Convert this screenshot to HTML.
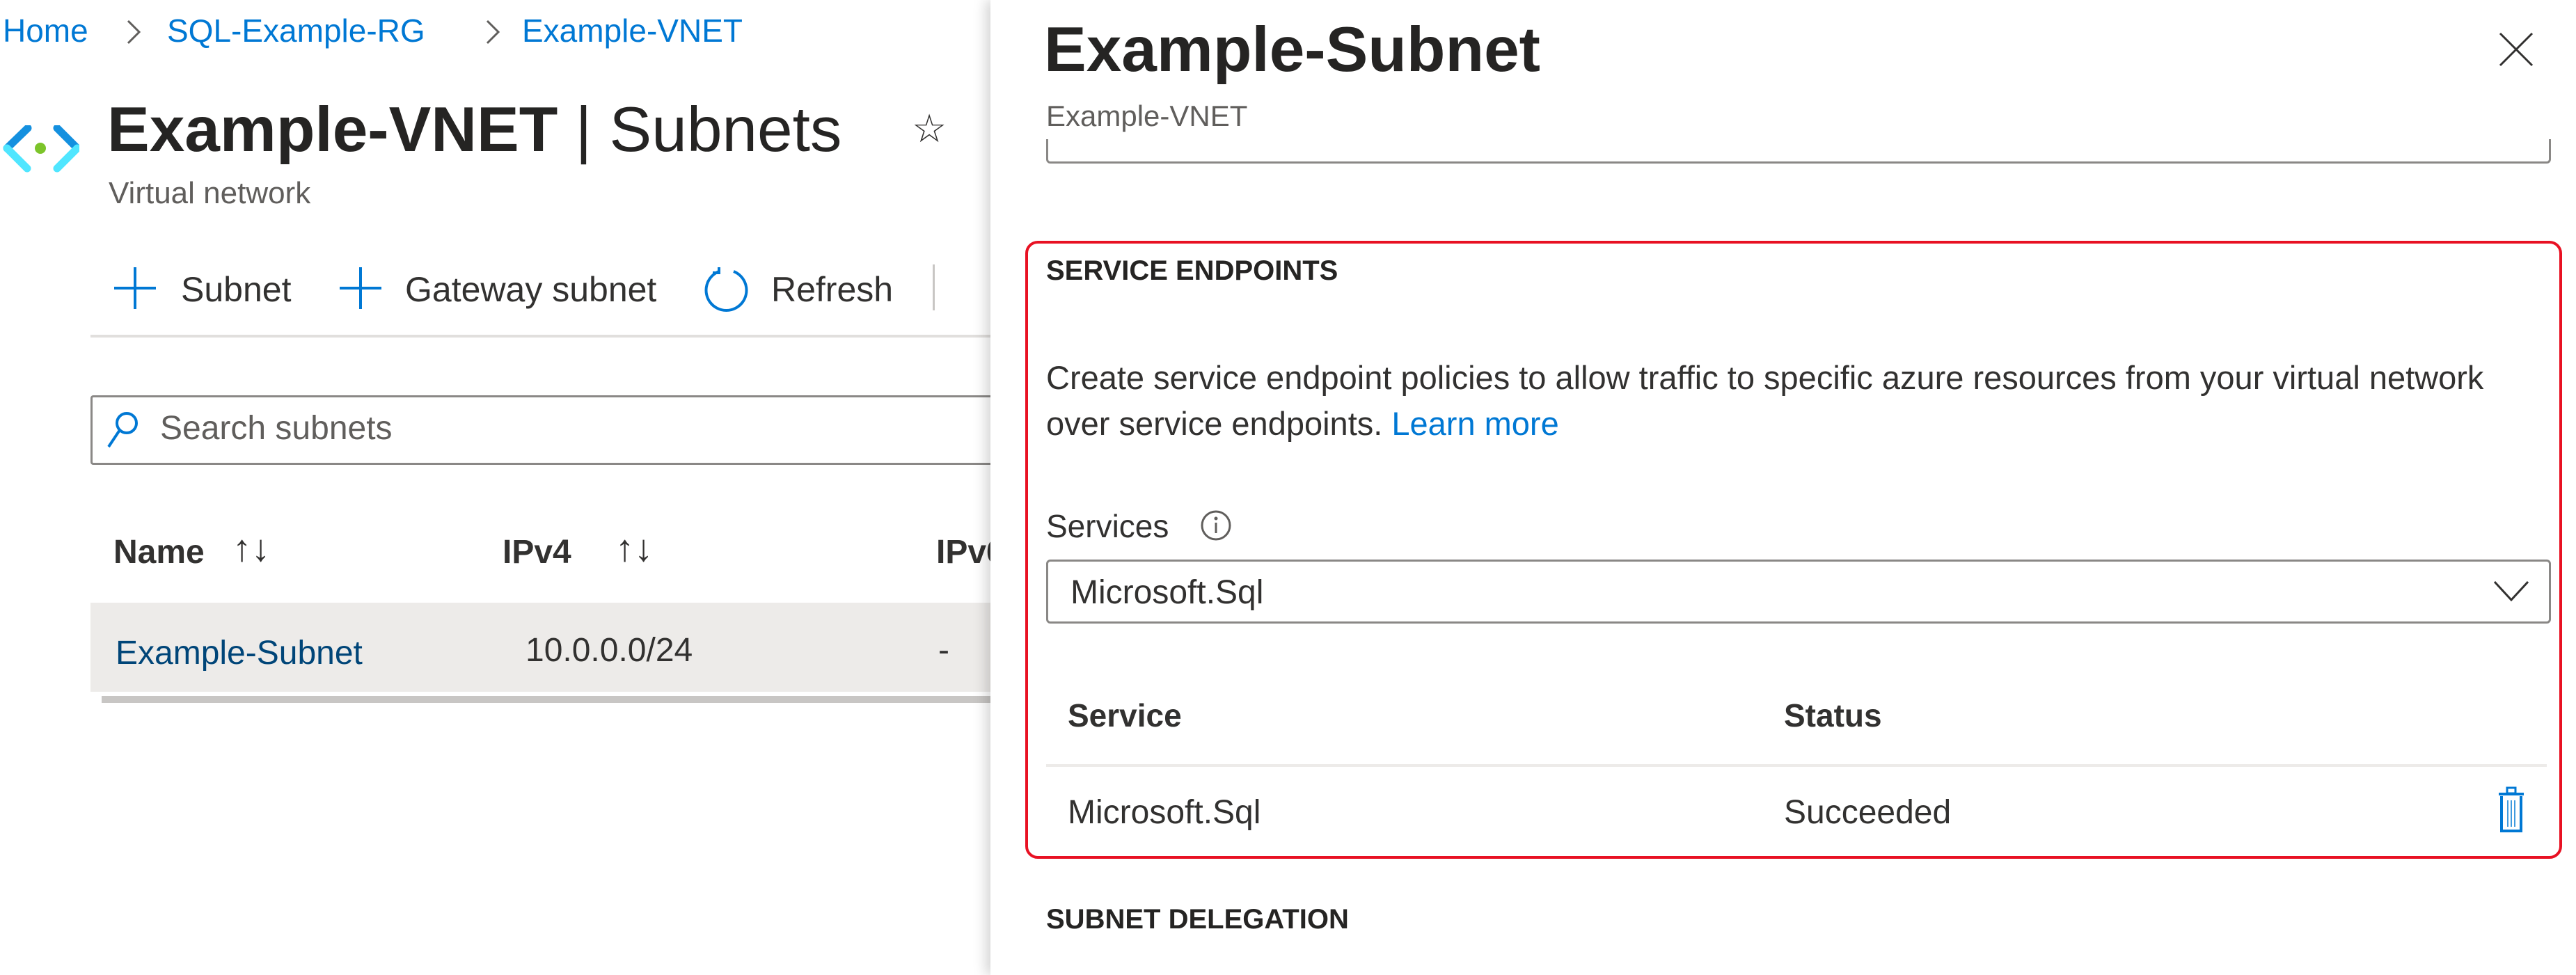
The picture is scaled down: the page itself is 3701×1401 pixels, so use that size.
<!DOCTYPE html>
<html><head><meta charset="utf-8"><style>
html,body{margin:0;padding:0}
body{width:3701px;height:1401px;position:relative;overflow:hidden;background:#fff;font-family:"Liberation Sans",sans-serif;color:#323130}
.a{position:absolute;white-space:nowrap}
.blue{color:#0078d4}
</style></head><body>
<!-- left blade -->
<div class="a blue" style="left:4px;top:14px;font-size:46px;line-height:60px">Home</div>
<svg class="a" style="left:180px;top:28px" width="24" height="36"><path d="M4 2 L20 18 L4 34" stroke="#605e5c" stroke-width="3" fill="none"/></svg>
<div class="a blue" style="left:240px;top:14px;font-size:46px;line-height:60px">SQL-Example-RG</div>
<div class="a" style="left:696px;top:28px"><svg width="24" height="36"><path d="M4 2 L20 18 L4 34" stroke="#605e5c" stroke-width="3" fill="none"/></svg></div>
<div class="a blue" style="left:750px;top:14px;font-size:46px;line-height:60px">Example-VNET</div>

<svg class="a" style="left:4px;top:180px" width="110" height="68" viewBox="0 0 110 68">
<path d="M36 4 L6 33" stroke="#1490df" stroke-width="11" stroke-linecap="round"/>
<path d="M6 33 L35 62" stroke="#50e6ff" stroke-width="11" stroke-linecap="round"/>
<path d="M78 4 L107 33" stroke="#1490df" stroke-width="11" stroke-linecap="round"/>
<path d="M107 33 L78 62" stroke="#50e6ff" stroke-width="11" stroke-linecap="round"/>
<circle cx="54" cy="33" r="8" fill="#7cc42a"/>
</svg>
<div class="a" style="left:154px;top:132px;font-size:91px;line-height:110px;color:#252423"><b>Example-VNET</b> | Subnets</div>
<div class="a" style="left:1310px;top:150px;font-size:56px;line-height:70px">☆</div>
<div class="a" style="left:156px;top:250px;font-size:44px;line-height:56px;color:#605e5c">Virtual network</div>

<svg class="a" style="left:162px;top:382px" width="64" height="64"><path d="M32 2V62M2 32H62" stroke="#0078d4" stroke-width="4"/></svg>
<div class="a" style="left:260px;top:384px;font-size:50px;line-height:64px">Subnet</div>
<svg class="a" style="left:486px;top:382px" width="64" height="64"><path d="M32 2V62M2 32H62" stroke="#0078d4" stroke-width="4"/></svg>
<div class="a" style="left:582px;top:384px;font-size:50px;line-height:64px">Gateway subnet</div>
<svg class="a" style="left:1008px;top:382px" width="70" height="70"><path d="M25 8 A29 29 0 1 0 46 8" stroke="#0078d4" stroke-width="4" fill="none"/><path d="M25 2 V10 H16" stroke="#0078d4" stroke-width="4" fill="none"/></svg>
<div class="a" style="left:1108px;top:384px;font-size:50px;line-height:64px">Refresh</div>
<div class="a" style="left:1340px;top:380px;width:3px;height:66px;background:#c8c6c4"></div>
<div class="a" style="left:130px;top:481px;width:1300px;height:4px;background:#e1dfdd"></div>

<div class="a" style="left:130px;top:568px;width:1300px;height:94px;border:3px solid #8a8886;border-radius:4px"></div>
<svg class="a" style="left:152px;top:590px" width="48" height="56"><circle cx="30" cy="18" r="14" stroke="#0078d4" stroke-width="4" fill="none"/><path d="M20 28 L4 52" stroke="#0078d4" stroke-width="4"/></svg>
<div class="a" style="left:230px;top:585px;font-size:48px;line-height:62px;color:#605e5c">Search subnets</div>

<div class="a" style="left:163px;top:762px;font-size:48px;line-height:64px;font-weight:bold">Name</div>
<div class="a" style="left:334px;top:756px;font-size:54px;line-height:64px">↑↓</div>
<div class="a" style="left:722px;top:762px;font-size:48px;line-height:64px;font-weight:bold">IPv4</div>
<div class="a" style="left:884px;top:756px;font-size:54px;line-height:64px">↑↓</div>
<div class="a" style="left:1345px;top:762px;font-size:48px;line-height:64px;font-weight:bold">IPv6</div>
<div class="a" style="left:130px;top:866px;width:1300px;height:128px;background:#edebe9"></div>
<div class="a" style="left:166px;top:907px;font-size:48px;line-height:64px;color:#004578">Example-Subnet</div>
<div class="a" style="left:755px;top:903px;font-size:48px;line-height:64px">10.0.0.0/24</div>
<div class="a" style="left:1348px;top:903px;font-size:48px;line-height:64px">-</div>
<div class="a" style="left:146px;top:1000px;width:1284px;height:10px;background:#c8c6c4"></div>

<!-- right panel -->
<div class="a" style="left:1423px;top:0;width:2278px;height:1401px;background:#fff;box-shadow:-6px 0 18px rgba(0,0,0,0.18)"></div>
<div class="a" style="left:1500px;top:12px;font-size:91px;line-height:120px;font-weight:bold;color:#252423">Example-Subnet</div>
<svg class="a" style="left:3590px;top:46px" width="50" height="50"><path d="M2 2L48 48M48 2L2 48" stroke="#323130" stroke-width="3"/></svg>
<div class="a" style="left:1503px;top:140px;font-size:42px;line-height:54px;color:#605e5c">Example-VNET</div>
<div class="a" style="left:1503px;top:200px;width:2156px;height:32px;border:3px solid #8a8886;border-top:none;border-radius:0 0 6px 6px"></div>

<div class="a" style="left:1473px;top:346px;width:2200px;height:880px;border:4px solid #e81123;border-radius:18px"></div>
<div class="a" style="left:1503px;top:364px;font-size:40px;line-height:50px;font-weight:bold;color:#252423">SERVICE ENDPOINTS</div>
<div class="a" style="left:1503px;top:510px;font-size:47px;line-height:66px;width:2130px;white-space:normal">Create service endpoint policies to allow traffic to specific azure resources from your virtual network over service endpoints. <span class="blue">Learn more</span></div>
<div class="a" style="left:1503px;top:726px;font-size:46px;line-height:60px">Services</div>
<svg class="a" style="left:1724px;top:732px" width="46" height="46"><circle cx="23" cy="23" r="20" stroke="#605e5c" stroke-width="3" fill="none"/><path d="M23 19V34" stroke="#605e5c" stroke-width="3"/><circle cx="23" cy="13" r="2.5" fill="#605e5c"/></svg>
<div class="a" style="left:1503px;top:804px;width:2156px;height:86px;border:3px solid #8a8886;border-radius:6px"></div>
<div class="a" style="left:1538px;top:822px;font-size:48px;line-height:60px">Microsoft.Sql</div>
<svg class="a" style="left:3582px;top:834px" width="52" height="32"><path d="M2 2L26 28L50 2" stroke="#323130" stroke-width="3" fill="none"/></svg>
<div class="a" style="left:1534px;top:998px;font-size:46px;line-height:60px;font-weight:bold">Service</div>
<div class="a" style="left:2563px;top:998px;font-size:46px;line-height:60px;font-weight:bold">Status</div>
<div class="a" style="left:1503px;top:1098px;width:2156px;height:4px;background:#edebe9"></div>
<div class="a" style="left:1534px;top:1138px;font-size:48px;line-height:60px">Microsoft.Sql</div>
<div class="a" style="left:2563px;top:1138px;font-size:48px;line-height:60px">Succeeded</div>
<svg class="a" style="left:3588px;top:1130px" width="40" height="68" viewBox="0 0 40 68"><rect x="14" y="2" width="12" height="8" stroke="#0078d4" stroke-width="3" fill="none"/><path d="M2 11H38" stroke="#0078d4" stroke-width="4"/><path d="M6 14V64H34V14" stroke="#0078d4" stroke-width="4" fill="none"/><path d="M15 20V58M20 20V58M25 20V58" stroke="#0078d4" stroke-width="1.5"/></svg>
<div class="a" style="left:1503px;top:1296px;font-size:40px;line-height:50px;font-weight:bold;color:#252423">SUBNET DELEGATION</div>
</body></html>
